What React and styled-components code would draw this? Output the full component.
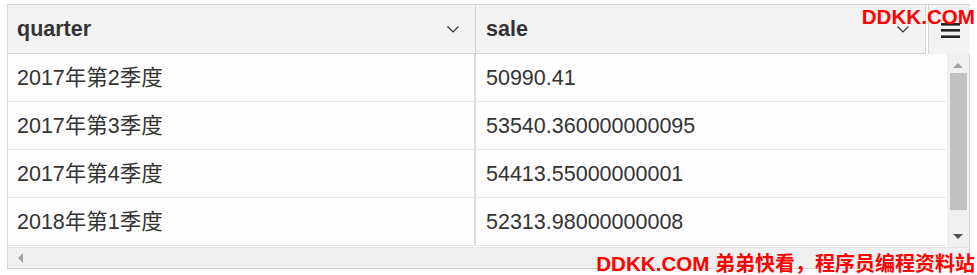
import React from "react";
import styled, { createGlobalStyle } from "styled-components";

const Global = createGlobalStyle`
  html, body { margin: 0; padding: 0; background: #ffffff; }
  body { font-family: "Liberation Sans", "Noto Sans CJK SC", Arial, sans-serif; }
`;

const Page = styled.div`
  position: relative;
  width: 977px;
  height: 275px;
  padding: 4px 0 0 7px;
  box-sizing: border-box;
  overflow: hidden;
`;

const Grid = styled.div`
  width: 963px;
  height: 265px;
  box-sizing: border-box;
  border: 1px solid #d4d4d4;
  display: flex;
  flex-direction: column;
  color: #333333;
  font-size: 21.5px;
  line-height: 24px;
  background: #ffffff;
`;

const HeaderRow = styled.div`
  display: flex;
  height: 49px;
  flex: none;
`;

const HeaderCells = styled.div`
  display: flex;
  width: 918px;
  background: #f3f3f3;
  border-bottom: 1px solid #d4d4d4;
`;

const HeaderCell = styled.div`
  width: ${(p) => p.w}px;
  flex: none;
  box-sizing: border-box;
  border-right: 1px solid #d4d4d4;
  display: flex;
  align-items: center;
  justify-content: space-between;
  padding: 0 16px 0 ${(p) => p.pl}px;
  font-weight: bold;
`;

const MenuButton = styled.div`
  flex: none;
  width: 42px;
  height: 51px;
  margin: -1px 0 0 2px;
  box-sizing: border-box;
  border: 1px solid #d4d4d4;
  border-right: none;
  background: #f3f3f3;
  display: flex;
  align-items: center;
  justify-content: center;
  padding-left: 1px;
`;

const Body = styled.div`
  display: flex;
  flex: none;
  height: 193px;
`;

const Rows = styled.div`
  width: 938px;
  flex: none;
  display: flex;
  flex-direction: column;
  background: #fdfdfd;
`;

const Row = styled.div`
  display: flex;
  height: 48px;
  flex: none;
  box-sizing: border-box;
  border-bottom: 1px solid #e4e4e4;
`;

const Cell = styled.div`
  width: ${(p) => (p.w ? `${p.w}px` : "auto")};
  flex: ${(p) => (p.w ? "none" : "1")};
  box-sizing: border-box;
  border-right: ${(p) => (p.w ? "2px solid #dcdcdc" : "none")};
  display: flex;
  align-items: center;
  padding-left: ${(p) => p.pl}px;
  white-space: nowrap;
`;

const VScroll = styled.div`
  margin-left: 1px;
  width: 22px;
  flex: none;
  background: #f0f0f0;
  display: flex;
  flex-direction: column;
  align-items: center;
`;

const Arrow = styled.div`
  width: 0;
  height: 0;
  border-left: 5px solid transparent;
  border-right: 5px solid transparent;
  ${(p) =>
    p.dir === "up"
      ? "border-bottom: 5px solid #a3a3a3;"
      : "border-top: 5px solid #505050;"}
  margin: ${(p) => p.m};
`;

const Thumb = styled.div`
  width: 17px;
  height: 137px;
  background: #c1c1c1;
  margin-top: 5px;
`;

const Filler = styled.div`
  flex: 1;
`;

const HScroll = styled.div`
  flex: 1;
  background: #f0f0f0;
  border-top: 1px solid #e4e4e4;
  display: flex;
  align-items: center;
  padding-left: 10px;
`;

const LeftArrow = styled.div`
  width: 0;
  height: 0;
  border-top: 5px solid transparent;
  border-bottom: 5px solid transparent;
  border-right: 5px solid #a3a3a3;
`;

const Mark = styled.div`
  position: absolute;
  right: 2px;
  top: ${(p) => p.top}px;
  color: #ff0000;
  font-weight: bold;
  font-size: 20px;
  line-height: 22px;
  font-family: "Liberation Sans", "Noto Sans CJK SC", Arial, sans-serif;
  white-space: nowrap;
`;

const Latin = styled.span`
  font-size: 20.6px;
`;

const Chevron = () => (
  <svg width="12" height="7" viewBox="0 0 12 7">
    <path d="M0.5 0.5 L6 6 L11.5 0.5" fill="none" stroke="#333" strokeWidth="1.2" />
  </svg>
);

const Hamburger = () => (
  <svg width="19" height="16" viewBox="0 0 19 16">
    <rect x="0" y="1" width="19" height="2.6" fill="#222" />
    <rect x="0" y="7" width="19" height="2.6" fill="#222" />
    <rect x="0" y="13.4" width="19" height="2.6" fill="#222" />
  </svg>
);

const data = [
  ["2017年第2季度", "50990.41"],
  ["2017年第3季度", "53540.360000000095"],
  ["2017年第4季度", "54413.55000000001"],
  ["2018年第1季度", "52313.98000000008"],
];

export default function App() {
  return (
    <>
      <Global />
      <Page>
        <Grid>
          <HeaderRow>
            <HeaderCells>
              <HeaderCell w={468} pl={9}>
                <span>quarter</span>
                <Chevron />
              </HeaderCell>
              <HeaderCell w={450} pl={10}>
                <span>sale</span>
                <Chevron />
              </HeaderCell>
            </HeaderCells>
            <MenuButton>
              <Hamburger />
            </MenuButton>
          </HeaderRow>
          <Body>
            <Rows>
              {data.map(([q, s]) => (
                <Row key={q}>
                  <Cell w={468} pl={9}>{q}</Cell>
                  <Cell pl={10}>{s}</Cell>
                </Row>
              ))}
            </Rows>
            <VScroll>
              <Arrow dir="up" m="9px 0 0 0" />
              <Thumb />
              <Filler />
              <Arrow dir="down" m="0 0 8px 0" />
            </VScroll>
          </Body>
          <HScroll>
            <LeftArrow />
          </HScroll>
        </Grid>
        <Mark top={6}><Latin>DDKK.COM</Latin></Mark>
        <Mark top={253}><Latin>DDKK.COM</Latin> 弟弟快看，程序员编程资料站</Mark>
      </Page>
    </>
  );
}
